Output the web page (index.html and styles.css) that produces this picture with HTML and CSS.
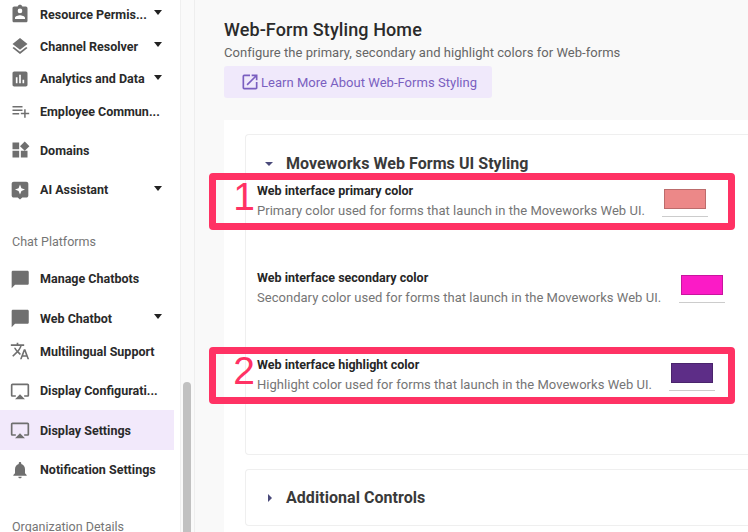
FILE: index.html
```html
<!DOCTYPE html>
<html lang="en">
<head>
<meta charset="utf-8">
<title>Web-Form Styling Home</title>
<link rel="stylesheet" href="styles.css">
</head>
<body>
<div class="app">
  <nav class="sidebar">
    <div class="nav">
      <div class="row h28"><svg class="ico" viewBox="0 0 24 24"><path d="M19 3h-4.200C14.400 1.800 13.300 1 12 1s-2.400.8-2.800 2H5c-1.100 0-2 .9-2 2v15c0 1.100.9 2 2 2h14c1.100 0 2-.9 2-2V5c0-1.100-.9-2-2-2zm-7 2.500a2.800 2.800 0 1 1 0 5.600 2.800 2.800 0 0 1 0-5.600zM18 18H6v-1.500c0-2 4-3.100 6-3.100s6 1.100 6 3.100V18z"/></svg><span class="lbl">Resource Permis...</span><i class="caret"></i></div>
      <div class="row h32"><svg class="ico" viewBox="0 0 24 24"><path d="M12 16.500l7.400-5.700L21 9.500 12 2.500 3 9.500l1.600 1.300L12 16.500zm0 2.500l-7.400-5.700L3 14.500l9 7 9-7-1.600-1.300L12 19z"/></svg><span class="lbl">Channel Resolver</span><i class="caret"></i></div>
      <div class="row h32"><svg class="ico" viewBox="0 0 24 24"><path d="M19 3H5c-1.100 0-2 .9-2 2v14c0 1.100.9 2 2 2h14c1.100 0 2-.9 2-2V5c0-1.100-.9-2-2-2zM9 17H7v-7h2v7zm4 0h-2V7h2v10zm4 0h-2v-4h2v4z"/></svg><span class="lbl">Analytics and Data</span><i class="caret"></i></div>
      <div class="row h33"><svg class="ico" viewBox="0 0 24 24"><path d="M3 6h12v1.800H3zM3 10.200h12V12H3zM3 14.400h8v1.800H3zM17 14v-4h1.800v4H23v1.800h-4.200V20H17v-4.200h-4V14z"/></svg><span class="lbl">Employee Commun...</span></div>
      <div class="row"><svg class="ico" viewBox="0 0 24 24"><path d="M3 3h8v8H3zM3 13h8v8H3zM13 13h8v8h-8zM17.700 1.700l5.600 5.700-5.600 5.600-5.700-5.600z"/></svg><span class="lbl">Domains</span></div>
      <div class="row"><svg class="ico" viewBox="0 0 24 24"><path fill-rule="evenodd" d="M4.500 2h15C20.900 2 22 3.100 22 4.500v14c0 1.400-1.100 2.500-2.500 2.500h-4.700L12 23.500 9.200 21H4.500C3.100 21 2 19.900 2 18.500v-14C2 3.100 3.100 2 4.500 2zM12 5.500l-1.700 4.300L6 11.500l4.300 1.700 1.700 4.300 1.700-4.300 4.300-1.700-4.300-1.700z"/></svg><span class="lbl">AI Assistant</span><i class="caret"></i></div>
      <div class="section first">Chat Platforms</div>
      <div class="row"><svg class="ico" viewBox="0 0 24 24"><path d="M21 2H3.500C2.600 2 2 2.700 2 3.500V23l4-4h15c.8 0 1.500-.7 1.500-1.500v-14C22.500 2.700 21.800 2 21 2z"/></svg><span class="lbl">Manage Chatbots</span></div>
      <div class="row"><svg class="ico" viewBox="0 0 24 24"><path d="M21 2H3.500C2.600 2 2 2.700 2 3.500V23l4-4h15c.8 0 1.500-.7 1.500-1.500v-14C22.500 2.700 21.800 2 21 2z"/></svg><span class="lbl">Web Chatbot</span><i class="caret"></i></div>
      <div class="row h27"><svg class="ico" viewBox="0 0 24 24"><path d="M12.900 15.100l-2.600-2.500c1.800-2 3-4.200 3.700-6.600H17V4h-7V2H8v2H1v2h11.200c-.7 1.900-1.700 3.800-3.200 5.400-.9-1-1.700-2.100-2.300-3.400h-2c.7 1.600 1.700 3.200 3 4.600l-5.100 5L4 19l5-5 3.100 3.100.8-2zM18.500 10h-2L12 22h2l1.100-3h4.800l1.100 3h2l-4.500-12zm-2.600 7l1.600-4.300 1.600 4.300h-3.200z"/></svg><span class="lbl">Multilingual Support</span></div>
      <div class="row"><svg class="ico" viewBox="0 0 24 24"><path d="M6 22h12l-6-6-6 6zM21 3H3c-1.100 0-2 .9-2 2v12c0 1.100.9 2 2 2h4v-2H3V5h18v12h-4v2h4c1.100 0 2-.9 2-2V5c0-1.100-.9-2-2-2z"/></svg><span class="lbl">Display Configurati...</span></div>
      <div class="row active"><svg class="ico" viewBox="0 0 24 24"><path d="M6 22h12l-6-6-6 6zM21 3H3c-1.100 0-2 .9-2 2v12c0 1.100.9 2 2 2h4v-2H3V5h18v12h-4v2h4c1.100 0 2-.9 2-2V5c0-1.100-.9-2-2-2z"/></svg><span class="lbl">Display Settings</span></div>
      <div class="row"><svg class="ico" viewBox="0 0 24 24"><path d="M12 22c1.100 0 2-.9 2-2h-4c0 1.100.9 2 2 2zm6-6v-5c0-3.100-1.600-5.600-4.500-6.300V4c0-.8-.7-1.500-1.500-1.500s-1.500.7-1.500 1.500v.7C7.600 5.400 6 7.900 6 11v5l-2 2v1h16v-1l-2-2z"/></svg><span class="lbl">Notification Settings</span></div>
      <div class="section last">Organization Details</div>
    </div>
    <div class="track"><div class="thumb"></div></div>
  </nav>
  <main class="main">
    <h1 class="title">Web-Form Styling Home</h1>
    <p class="desc">Configure the primary, secondary and highlight colors for Web-forms</p>
    <a class="learn"><svg class="ext" viewBox="0 0 24 24"><path d="M19 19H5V5h7V3H5a2 2 0 0 0-2 2v14a2 2 0 0 0 2 2h14c1.100 0 2-.9 2-2v-7h-2v7zM14 3v2h3.600l-9.800 9.800 1.400 1.400L19 6.400V10h2V3h-7z"/></svg>Learn More About Web-Forms Styling</a>
    <section class="panel">
      <div class="card big">
        <div class="acc"><i class="tri-down"></i><h2>Moveworks Web Forms UI Styling</h2></div>
        <div class="setting s1">
          <div><h3>Web interface primary color</h3><p>Primary color used for forms that launch in the Moveworks Web UI.</p></div>
          <div class="swatch"><b class="c1"></b></div>
        </div>
        <div class="setting s2">
          <div><h3>Web interface secondary color</h3><p>Secondary color used for forms that launch in the Moveworks Web UI.</p></div>
          <div class="swatch"><b class="c2"></b></div>
        </div>
        <div class="setting s3">
          <div><h3>Web interface highlight color</h3><p>Highlight color used for forms that launch in the Moveworks Web UI.</p></div>
          <div class="swatch"><b class="c3"></b></div>
        </div>
      </div>
      <div class="card small">
        <div class="acc"><i class="tri-right"></i><h2>Additional Controls</h2></div>
      </div>
    </section>
    <div class="mark m1"><span>1</span></div>
    <div class="mark m2"><span>2</span></div>
  </main>
</div>
</body>
</html>
```
FILE: styles.css
```css
* { box-sizing: border-box; }
html, body { margin: 0; height: 100%; overflow: hidden; }
body { font-family: Roboto, "Liberation Sans", sans-serif; background: #fff; color: #212121; }
.app { display: flex; width: 748px; height: 532px; overflow: hidden; }

.sidebar { width: 195px; flex: none; display: flex; background: #fff; height: 532px; overflow: hidden; }
.nav { width: 180px; flex: none; padding-right: 6px; }
.track { width: 15px; flex: none; background: #fafafa; border-left: 1px solid #f0f0f0; border-right: 1px solid #eee; position: relative; }
.thumb { position: absolute; left: 2px; top: 382px; width: 8px; height: 150px; background: #c1c1c1; border-radius: 4px 4px 0 0; }

.row { display: flex; align-items: center; height: 39.5px; padding-left: 10px; font-size: 12.5px; font-weight: 700; color: #2a2a2a; }
.row.h28 { height: 28px; margin-bottom: 2px; }
.row.h32 { height: 32.5px; }
.row.h33 { height: 32.5px; margin-bottom: 3px; }
.row.h27 { height: 27px; margin-bottom: 6px; }
.row.active { background: #f2e9fb; }
.ico { width: 20px; height: 20px; fill: #6f6f6f; flex: none; margin-right: 10px; }
.lbl { flex: 1; white-space: nowrap; }
.caret { width: 0; height: 0; border-left: 4.5px solid transparent; border-right: 4.5px solid transparent; border-top: 5px solid #222; margin-right: 12px; margin-top: -3px; }
.section { font-size: 12.5px; color: #757575; padding-left: 12px; height: 16px; line-height: 16px; }
.section.first { margin: 24.5px 0 8.75px; }
.section.last { margin-top: 30px; }

.main { position: relative; flex: 1; min-width: 0; background: #f9f9f9; padding: 19px 0 0 29px; }
.title { margin: 0; font-size: 18px; line-height: 21px; font-weight: 500; color: #2b2b2b; letter-spacing: .1px; }
.desc { margin: 4px 0 0; font-size: 13px; line-height: 18px; color: #666; letter-spacing: .04px; white-space: nowrap; }
.learn { display: inline-flex; align-items: center; margin-top: 4px; height: 32px; width: 268px; padding-left: 16px; background: #f0e9fb; border-radius: 3px; color: #7a5fc0; font-size: 13px; letter-spacing: .03px; white-space: nowrap; }
.ext { width: 20px; height: 20px; fill: #7a5fc0; margin-right: 1px; flex: none; }

.panel { margin-top: 22px; background: #fff; padding: 14px 0 0 21px; height: 420px; }
.card { border: 1px solid #efefef; border-right: 0; border-radius: 4px 0 0 4px; background: #fff; }
.card.big { height: 321px; }
.card.small { height: 57px; margin-top: 14px; }
.acc { display: flex; align-items: center; padding-left: 19px; }
.big .acc { height: 27px; margin-top: 15px; }
.small .acc { height: 55px; }
.acc h2 { margin: 0; font-size: 16px; font-weight: 700; color: #3a3a3a; white-space: nowrap; letter-spacing: .05px; }
.tri-down { width: 0; height: 0; border-left: 4px solid transparent; border-right: 4px solid transparent; border-top: 4px solid #4a4a7a; margin-right: 13px; }
.tri-right { width: 0; height: 0; border-top: 4px solid transparent; border-bottom: 4px solid transparent; border-left: 4px solid #4a4a7a; margin: 0 14px 0 3px; }

.setting { display: flex; justify-content: space-between; padding-left: 11px; }
.setting h3 { margin: 0; font-size: 12.5px; line-height: 16px; font-weight: 700; color: #262626; white-space: nowrap; }
.setting p { margin: 4px 0 0; font-size: 13px; line-height: 16px; color: #757575; letter-spacing: .03px; white-space: nowrap; }
.s1 { margin-top: 6px; }
.s2 { margin-top: 51px; }
.s3 { margin-top: 51px; }
.swatch { display: flex; flex: none; justify-content: center; width: 46px; height: 34px; border-bottom: 1px solid #ccc; padding-top: 6px; }
.swatch b { display: block; width: 42px; height: 20px; border: 1px solid rgba(0,0,0,.2); }
.s1 .swatch { margin-right: 40px; }
.s2 .swatch { margin-right: 23px; height: 33px; padding-top: 5px; }
.s3 .swatch { margin-right: 33px; }
.c1 { background: #ec8888; }
.c2 { background: #fb1bc6; }
.c3 { background: #5d2d87; }

.mark { position: absolute; border: 7px solid #ff3264; border-radius: 4px; height: 57px; left: 14px; width: 526px; }
.m1 { top: 173px; }
.m2 { top: 347px; }
.mark span { position: absolute; right: 473px; top: -5px; color: #ff3264; font-family: "Liberation Sans", sans-serif; font-size: 39px; line-height: 44px; }
```
